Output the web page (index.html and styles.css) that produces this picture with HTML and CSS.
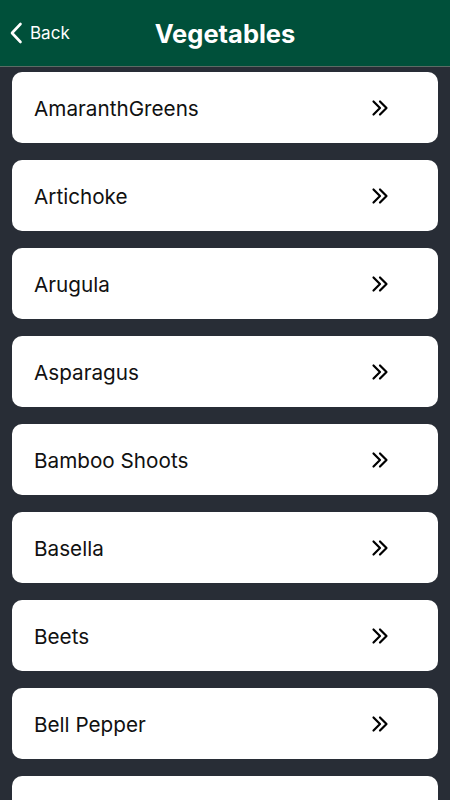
FILE: index.html
```html
<!DOCTYPE html>
<html lang="en">
<head>
  <meta charset="UTF-8">
  <meta name="viewport" content="width=device-width, initial-scale=1.0">
  <title>Vegetables</title>
  <link rel="stylesheet" href="styles.css">
</head>
<body>

<div class="topo">
  <a class="voltar" href="#">
    <svg width="14" height="22" viewBox="0 0 14 22"><path d="M11.5 2 L3 11 L11.5 20" fill="none" stroke="white" stroke-width="2.6" stroke-linecap="round" stroke-linejoin="round"/></svg>
    <span>Back</span>
  </a>
  <h2>Vegetables</h2>
</div>

<div class="lista" id="lista"></div>

<script>
const vegetais = ["AmaranthGreens", "Artichoke", "Arugula", "Asparagus", "Bamboo Shoots", "Basella", "Beets", "Bell Pepper", ""];

const lista = document.getElementById('lista');

// Cria os cartoes
vegetais.forEach(nome => {
  const card = document.createElement('div');
  card.className = 'item';
  card.innerHTML = `<span class="nome">${nome}</span>
    <svg class="seta" width="18" height="18" viewBox="0 0 18 18"><path d="M2.5 2.5 L9 9 L2.5 15.5 M9 2.5 L15.5 9 L9 15.5" fill="none" stroke="black" stroke-width="2.2" stroke-linecap="round" stroke-linejoin="round"/></svg>`;
  lista.appendChild(card);
});
</script>

</body>
</html>
```

FILE: styles.css
```css
body {
  font-family: Inter, "Liberation Sans", Arial, sans-serif;
  margin: 0;
  background-color: #282d36;
}

.topo {
  position: relative;
  height: 66px;
  background-color: #00503a;
  border-bottom: 1px solid #5b6b64;
  display: flex;
  align-items: center;
  justify-content: center;
}

.topo h2 {
  margin: 0;
  color: white;
  font-size: 25.5px;
  font-weight: bold;
}

.voltar {
  position: absolute;
  left: 9px;
  top: 22px;
  display: flex;
  align-items: center;
  gap: 7px;
  color: white;
  text-decoration: none;
  font-size: 17px;
}

.lista {
  display: flex;
  flex-direction: column;
  gap: 17px;
  padding: 5px 12px 0;
}

.item {
  display: flex;
  align-items: center;
  justify-content: space-between;
  height: 71px;
  padding: 0 49px 0 22px;
  background-color: white;
  border-radius: 10px;
}

.nome {
  font-size: 20.7px;
  color: #111;
  padding-top: 2px;
}
```
